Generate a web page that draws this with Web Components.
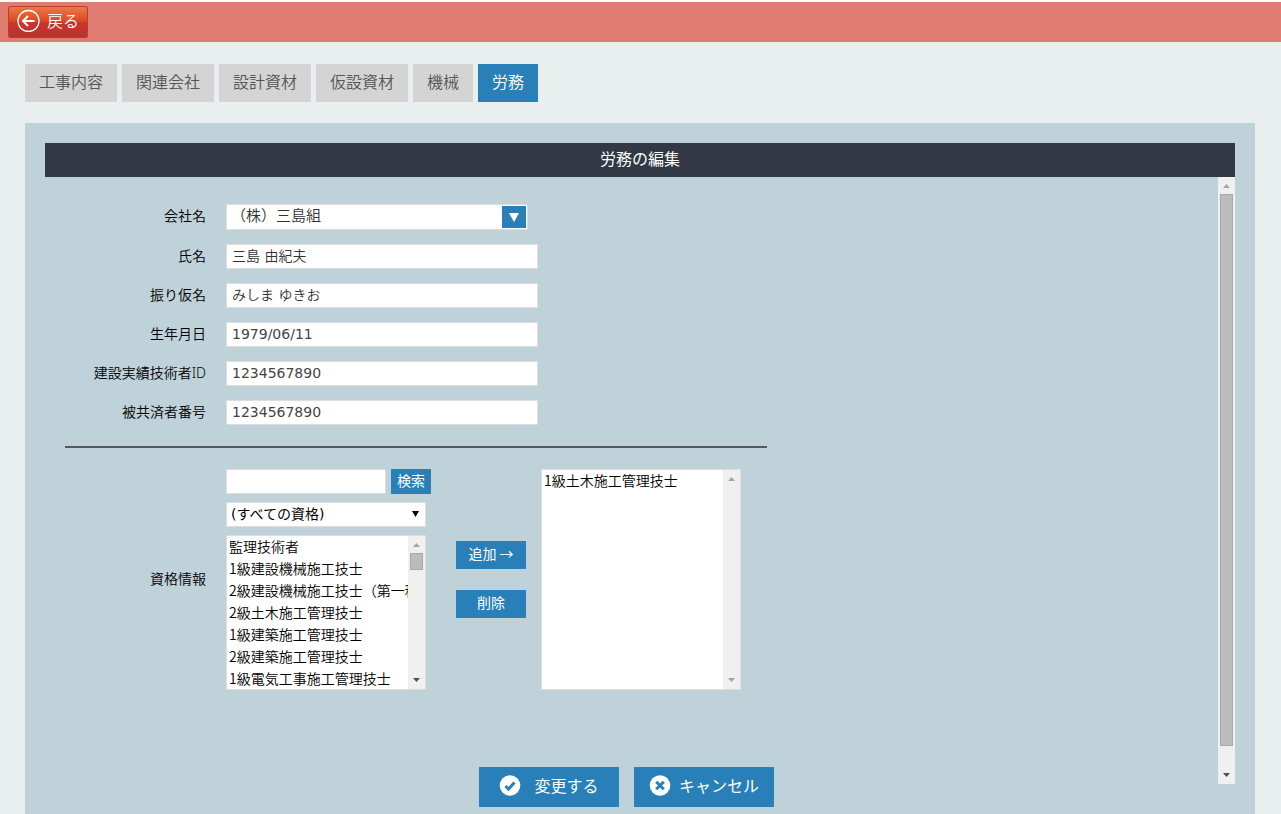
<!DOCTYPE html>
<html lang="ja">
<head>
<meta charset="utf-8">
<meta name="viewport" content="width=device-width, initial-scale=1">
<title>労務の編集</title>
<style>
  html { background: #e9eeee; }
  body { margin: 0; font-family: "Noto Sans CJK JP", sans-serif; font-size: 14px; font-weight: 350; color: #000;
    --blue: #2980b9; --line: #dddddd; --panel: #c0d2d9; --bar: #323844; --numeric: "DejaVu Sans", "Noto Sans CJK JP", sans-serif; }
</style>
</head>
<body>
<labor-page></labor-page>

<script>
const define = (name, html, setup) => {
  const template = document.createElement('template');
  template.innerHTML = '<style>*{box-sizing:border-box}button,input,select{font:inherit;margin:0;border-radius:0}button{cursor:pointer}</style>' + html;
  customElements.define(name, class extends HTMLElement {
    constructor() {
      super();
      this.attachShadow({ mode: 'open' }).append(template.content.cloneNode(true));
    }
    connectedCallback() {
      if (setup && !this.ready) { this.ready = true; setup(this, this.shadowRoot); }
    }
  });
};

/* Vertical scroll rail: arrows, track and optional thumb */
define('scroll-rail', `
<style>
  :host { display: flex; flex-direction: column; width: 17px; flex: none; background: #f0f0f0; }
  svg { width: 17px; height: 17px; flex: none; fill: #505050; }
  .up { fill: #a3a3a3; }
  :host([idle]) svg { fill: #a3a3a3; }
  .track { flex: 1; display: flex; flex-direction: column; padding: 0 2px; }
  .thumb { height: var(--thumb, 17px); background: #bcbcbc; border: 1px solid #a8a8a8; }
  :host([idle]) .thumb { display: none; }
</style>
<svg class="up" viewBox="0 0 17 17" aria-hidden="true"><path d="M5 11 8.500 7 12 11z"/></svg>
<div class="track"><div class="thumb"></div></div>
<svg viewBox="0 0 17 17" aria-hidden="true"><path d="M5 6h7L8.500 10z"/></svg>
`);

define('back-button', `
<style>
  :host { display: block; }
  button { display: flex; align-items: center; gap: 6px; height: 32px; padding: 0 8px 4px; color: #fff; font-size: 16px;
    border: 1px solid #c03b2c; border-radius: 2px;
    background: linear-gradient(#ea7a42, #df4522 48%, #cb342c 52%, #b43531); }
  svg { width: 24px; height: 24px; fill: none; stroke: #fff; }
</style>
<button type="button">
  <svg viewBox="0 0 24 24" aria-hidden="true"><circle cx="11.500" cy="13" r="10.500" stroke-width="1.300"/><path d="M17.500 13H6.500M11 8l-5 5 5 5" stroke-width="2"/></svg>
  <slot></slot>
</button>
`);

define('nav-tab', `
<style>
  :host { display: block; }
  a { display: block; height: 38px; line-height: 34px; padding: 0 14px; font-size: 16px; color: #555; background: #d4d4d4; text-decoration: none; white-space: nowrap; }
  :host([current]) a { color: #fff; background: var(--blue); }
</style>
<a href="#"><slot></slot></a>
`, (host, root) => { if (host.hasAttribute('current')) root.querySelector('a').setAttribute('aria-current', 'page'); });

define('text-field', `
<style>
  :host { display: grid; grid-template-columns: 141px 312px; gap: 20px; align-items: start; }
  label { text-align: right; line-height: 24px; white-space: nowrap; font-family: "Noto Sans", "Noto Sans CJK JP", sans-serif; }
  input { width: 100%; height: 25px; padding: 0 5px 2px; border: 1px solid var(--line); background: #fff; color: #444; font-family: var(--numeric); font-weight: 400; }
  :host([kana]) input { padding-bottom: 3px; color: #333; font-weight: 350; }
</style>
<label for="field"></label><input id="field" type="text">
`, (host, root) => {
  root.querySelector('label').textContent = host.getAttribute('label');
  root.querySelector('input').value = host.getAttribute('value');
});

define('company-field', `
<style>
  :host { display: grid; grid-template-columns: 141px 302px; gap: 20px; align-items: start; }
  label { text-align: right; line-height: 23px; }
  .box { display: grid; grid-template-columns: 1fr 24px; padding: 1px; background: #fff; border: 1px solid var(--line); }
  select { grid-area: 1 / 1 / 2 / 3; height: 22px; padding: 0 28px 4px 3px; appearance: none; border: 0; background: transparent; color: #333; font-size: 15px; line-height: 18px; }
  svg { grid-area: 1 / 2; width: 24px; height: 22px; background: var(--blue); fill: #fff; pointer-events: none; }
</style>
<label for="company">会社名</label>
<div class="box">
  <select id="company"><option>（株）三島組</option></select>
  <svg viewBox="0 0 24 22" aria-hidden="true"><path d="M7 7h10L12 16z"/></svg>
</div>
`);

/* List box with its own rail; options are given as a "|" separated attribute */
define('option-list', `
<style>
  :host { display: flex; width: 200px; border: 1px solid var(--line); background: #fff; }
  select { flex: 1; min-width: 0; height: 100%; padding: 0; border: 0; background: transparent; color: #000; overflow: hidden; scrollbar-width: none; outline: 0; }
  option { display: block; height: 22px; min-height: 0; line-height: 20px; padding: 0 2px 2px; font-weight: 350; }
</style>
<select multiple></select><scroll-rail></scroll-rail>
`, (host, root) => {
  const select = root.querySelector('select');
  select.setAttribute('aria-label', host.getAttribute('label'));
  for (const text of host.getAttribute('items').split('|')) select.append(new Option(text));
  root.querySelector('scroll-rail').toggleAttribute('idle', host.hasAttribute('idle'));
});

define('blue-button', `
<style>
  :host { display: block; height: 28px; }
  button { width: 100%; height: 100%; border: 0; padding: 0 0 4px; background: var(--blue); color: #fff; display: flex; align-items: center; justify-content: center; gap: var(--gap, 8px); font-weight: 400; white-space: nowrap; }
</style>
<button type="button"><slot name="icon"></slot><span><slot></slot></span></button>
`);

define('license-picker', `
<style>
  :host { display: grid; grid-template-columns: 141px 225px auto 200px; justify-content: start; }
  .name { align-self: center; text-align: right; padding-bottom: 4px; }
  .source { display: grid; grid-template-rows: 25px 25px 155px; row-gap: 8px; margin-left: 20px; }
  .search { display: grid; grid-template-columns: 160px 40px; gap: 5px; }
  input { height: 25px; min-width: 0; border: 1px solid var(--line); background: #fff; padding: 0 5px; }
  .filter { display: grid; grid-template-columns: 1fr 17px; width: 200px; border: 1px solid var(--line); background: #fff; }
  .filter select { grid-area: 1 / 1 / 2 / 3; appearance: none; border: 0; padding: 0 20px 2px 4px; background: transparent; color: #000; font-family: var(--numeric); font-weight: 400; }
  .filter svg { grid-area: 1 / 2; width: 17px; height: 23px; pointer-events: none; }
  .search blue-button { height: 25px; }
  .moves { display: grid; grid-template-columns: 70px; align-content: start; gap: 21px; padding: 72px 15px 0 25px; }
</style>
<div class="name">資格情報</div>
<div class="source">
  <div class="search"><input type="text" aria-label="資格の検索"><blue-button>検索</blue-button></div>
  <div class="filter">
    <select aria-label="資格の種類"><option>(すべての資格)</option></select>
    <svg viewBox="0 0 17 23" aria-hidden="true"><path d="M4 8h7L7.500 14z"/></svg>
  </div>
  <option-list label="資格情報" items="監理技術者|1級建設機械施工技士|2級建設機械施工技士（第一種）|2級土木施工管理技士|1級建築施工管理技士|2級建築施工管理技士|1級電気工事施工管理技士"></option-list>
</div>
<div class="moves"><blue-button>追加 →</blue-button><blue-button>削除</blue-button></div>
<option-list idle label="選択した資格" items="1級土木施工管理技士"></option-list>
`);

define('edit-panel', `
<style>
  :host { display: flex; flex-direction: column; padding: 20px 20px 0; background: var(--panel); }
  h1 { margin: 0; height: 34px; line-height: 30px; background: var(--bar); color: #fff; font-size: 16px; font-weight: 400; text-align: center; }
  .body { flex: 1; display: flex; }
  form { flex: 1; min-width: 0; padding: 27px 10px 7px 20px; }
  .fields { display: grid; gap: 14px; }
  hr { width: 702px; max-width: 100%; height: 2px; margin: 21px 0; border: 0; background: #58585a; }
  .actions { display: flex; justify-content: center; gap: 15px; margin: 77px 0 0 -20px; }
  .actions blue-button { width: 140px; height: 40px; font-size: 16px; --gap: 8px; }
  .actions .save { --gap: 13px; }
  svg { width: 22px; height: 22px; display: block; }
  .body > scroll-rail { margin-bottom: 30px; --thumb: 552px; }
</style>
<h1>労務の編集</h1>
<div class="body">
  <form>
    <div class="fields">
      <company-field></company-field>
      <text-field kana label="氏名" value="三島 由紀夫"></text-field>
      <text-field kana label="振り仮名" value="みしま ゆきお"></text-field>
      <text-field label="生年月日" value="1979/06/11"></text-field>
      <text-field label="建設実績技術者ID" value="1234567890"></text-field>
      <text-field label="被共済者番号" value="1234567890"></text-field>
    </div>
    <hr>
    <license-picker></license-picker>
    <div class="actions">
      <blue-button class="save"><svg slot="icon" viewBox="0 0 22 22" aria-hidden="true"><circle cx="11" cy="11.500" r="10.300" fill="#fff"/><path d="M6.500 12l3 3 6-6.500" fill="none" stroke="#2980b9" stroke-width="3"/></svg>変更する</blue-button>
      <blue-button><svg slot="icon" viewBox="0 0 22 22" aria-hidden="true"><circle cx="11" cy="11.500" r="10.300" fill="#fff"/><path d="M7.200 7.700l7.600 7.600M14.800 7.700l-7.600 7.600" fill="none" stroke="#2980b9" stroke-width="3"/></svg>キャンセル</blue-button>
    </div>
  </form>
  <scroll-rail></scroll-rail>
</div>
`);

define('labor-page', `
<style>
  :host { display: flex; flex-direction: column; min-height: 100vh; }
  header { height: 42px; padding: 4px 8px 0; border-top: 2px solid #fff; background: #de7c70; }
  nav { display: flex; flex-wrap: wrap; gap: 5px; padding: 22px 25px 21px; }
  edit-panel { flex: 1; margin: 0 26px 0 25px; }
</style>
<header><back-button>戻る</back-button></header>
<nav aria-label="工事">
  <nav-tab>工事内容</nav-tab><nav-tab>関連会社</nav-tab><nav-tab>設計資材</nav-tab><nav-tab>仮設資材</nav-tab><nav-tab>機械</nav-tab><nav-tab current>労務</nav-tab>
</nav>
<edit-panel></edit-panel>
`);
</script>
</body>
</html>
